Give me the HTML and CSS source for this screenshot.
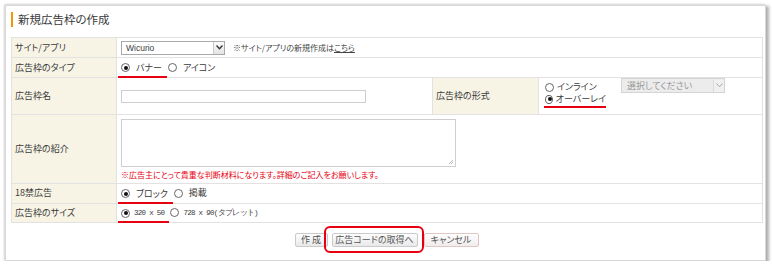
FILE: index.html
```html
<!DOCTYPE html>
<html lang="ja">
<head>
<meta charset="utf-8">
<link rel="stylesheet" href="styles.css">
</head>
<body>
<div class="card">
  <h1 class="title">新規広告枠の作成</h1>
  <table class="form">
    <colgroup>
      <col class="c1"><col class="c2"><col class="c3"><col class="c4">
    </colgroup>
    <tr class="r1">
      <th>サイト/アプリ</th>
      <td colspan="3">
        <span class="select"><span class="sel-text">Wicurio</span><span class="sel-arrow"><svg width="7" height="5" viewBox="0 0 7 5"><path d="M0.5 0.5 L3.5 3.8 L6.5 0.5" fill="none" stroke="#333" stroke-width="1.3"/></svg></span></span>
        <span class="note">※サイト/アプリの新規作成は<u>こちら</u></span>
      </td>
    </tr>
    <tr class="r2">
      <th>広告枠のタイプ</th>
      <td colspan="3">
        <span class="mark"><span class="radio on"></span><span class="rlabel">バナー</span></span><span class="radio"></span><span class="rlabel">アイコン</span>
      </td>
    </tr>
    <tr class="r3">
      <th>広告枠名</th>
      <td><span class="input"></span></td>
      <th>広告枠の形式</th>
      <td>
        <div class="fmt">
          <div class="fmt-radios">
            <div class="fline"><span class="radio"></span><span class="rl2">インライン</span></div>
            <div class="fline mark2"><span class="radio on"></span><span class="rl2">オーバーレイ</span></div>
          </div>
          <span class="select dis"><span class="sel-text">選択してください</span><span class="sel-arrow"><svg width="7" height="5" viewBox="0 0 7 5"><path d="M0.5 0.5 L3.5 3.8 L6.5 0.5" fill="none" stroke="#aaa" stroke-width="1"/></svg></span></span>
        </div>
      </td>
    </tr>
    <tr class="r4">
      <th>広告枠の紹介</th>
      <td colspan="3">
        <span class="textarea"><svg class="grip" width="6" height="6" viewBox="0 0 6 6"><path d="M5 1 L1 5 M5 3 L3 5" stroke="#bbb" stroke-width="1"/></svg></span>
        <div class="warn">※広告主にとって貴重な判断材料になります。詳細のご記入をお願いします。</div>
      </td>
    </tr>
    <tr class="r5">
      <th>18禁広告</th>
      <td colspan="3">
        <span class="mark"><span class="radio on"></span><span class="rlabel">ブロック</span></span><span class="radio"></span><span class="rlabel">掲載</span>
      </td>
    </tr>
    <tr class="r6">
      <th>広告枠のサイズ</th>
      <td colspan="3">
        <span class="mark"><span class="radio on"></span><span class="rlabel mono">320 x 50</span></span><span class="radio"></span><span class="rlabel mono">728 x 90(タブレット)</span>
      </td>
    </tr>
  </table>
  <div class="actions">
    <button class="btn b1">作 成</button>
    <span class="hl"><button class="btn b2">広告コードの取得へ</button></span>
    <button class="btn b3">キャンセル</button>
  </div>
</div>
</body>
</html>
```
FILE: styles.css
```css
html, body {
  margin: 0;
  padding: 0;
  background: #fff;
}
body {
  font-family: "Noto Sans CJK JP", "Liberation Sans", sans-serif;
  font-feature-settings: "palt";
  color: #3a3a3a;
  font-size: 9px;
}
.card {
  box-sizing: border-box;
  margin: 5px 0 0 5px;
  width: 761px;
  height: 256px;
  background: #fff;
  border: 1px solid #d8d8d8;
  box-shadow: 2px 2px 3px 1px #b0b0b0, -1px -1px 2px #ddd;
  padding: 6px 0 0 5px;
}
.title {
  margin: 0;
  height: 15px;
  border-left: 2px solid #f39800;
  padding-left: 5px;
  font-size: 11.5px;
  font-weight: normal;
  line-height: 15px;
  color: #3a3a3a;
}
.form {
  margin-top: 10px;
  width: 751px;
  border-collapse: collapse;
  table-layout: fixed;
  border: 1px solid #dedede;
}
.c1 { width: 105px; }
.c2 { width: 316px; }
.c3 { width: 106px; }
.c4 { width: 224px; }
.form th, .form td {
  border: 1px solid #e2e2e2;
  padding: 0 0 0 3px;
  vertical-align: middle;
  text-align: left;
  font-weight: normal;
  line-height: 12px;
  white-space: nowrap;
}
.form th {
  background: #f7f4e6;
}
.form td {
  padding-left: 4px;
}
.r1 { height: 20px; }
.r2 { height: 20px; }
.r3 { height: 37px; }
.r4 { height: 69px; }
.r5 { height: 19px; }
.r6 { height: 19px; }

.select {
  display: inline-flex;
  vertical-align: middle;
  box-sizing: border-box;
  width: 104px;
  height: 14px;
  border: 1px solid #a9a9a9;
  background: #fff;
  align-items: center;
  justify-content: space-between;
  font-size: 9px;
}
.sel-text {
  padding-left: 4px;
  font-family: "Liberation Sans", "Noto Sans CJK JP", sans-serif;
  font-size: 8.5px;
}
.sel-arrow {
  width: 11px;
  height: 12px;
  box-sizing: border-box;
  border-left: 1px solid #ccc;
  background: linear-gradient(#fafafa, #e4e4e4);
  display: flex;
  align-items: center;
  justify-content: center;
}
.note {
  margin-left: 6px;
  vertical-align: middle;
  color: #444;
  font-size: 8px;
}
.note u { color: #444; }

.radio {
  display: inline-block;
  box-sizing: border-box;
  width: 9px;
  height: 9px;
  border: 1px solid #666;
  border-radius: 50%;
  background: #fff;
  vertical-align: middle;
  position: relative;
}
.radio.on::after {
  content: "";
  position: absolute;
  left: 1.5px;
  top: 1.5px;
  width: 4px;
  height: 4px;
  border-radius: 50%;
  background: #111;
}
.rlabel {
  display: inline-block;
  margin-left: 6px;
  margin-right: 2px;
  vertical-align: middle;
}
.mono {
  font-family: "Liberation Mono", monospace;
  font-size: 7.5px;
  letter-spacing: -0.7px;
  margin-left: 4px;
}
.mark {
  display: inline-block;
  margin-left: -3px;
  padding: 2px 3px 2px 3px;
  border-bottom: 2px solid #e60012;
  vertical-align: middle;
  position: relative;
  top: 1px;
}
.form td > .radio { margin-left: 1px; }

.input {
  display: block;
  box-sizing: border-box;
  width: 245px;
  height: 13px;
  border: 1px solid #cfcfcf;
  background: #fff;
}
.fmt {
  display: flex;
  align-items: flex-start;
  gap: 15px;
  padding-left: 2px;
  margin-top: -3px;
}
.fmt-radios {
  display: flex;
  flex-direction: column;
  flex-shrink: 0;
}
.fline {
  display: flex;
  align-items: center;
  height: 12px;
}
.rl2 { margin-left: 3px; }
.mark2 {
  border-bottom: 2px solid #e60012;
  padding-bottom: 1px;
  margin-left: -1px;
  padding-left: 1px;
  width: 61px;
}
.select.dis {
  width: 104px;
  height: 15px;
  margin-top: -3px;
  border-color: #d4d4d4;
  background: #ececec;
  color: #999;
  flex-shrink: 0;
}
.select.dis .sel-arrow {
  background: #f0f0f0;
  border-left-color: #ddd;
}
.select.dis .sel-text {
  font-family: "Noto Sans CJK JP", sans-serif;
  font-size: 9px;
  padding-left: 5px;
}

.textarea {
  display: block;
  position: relative;
  box-sizing: border-box;
  width: 335px;
  height: 48px;
  border: 1px solid #cfcfcf;
  background: #fff;
  margin-top: 1px;
}
.grip {
  position: absolute;
  right: 1px;
  bottom: 1px;
}
.warn {
  color: #e60012;
  font-size: 8px;
  margin-top: 2px;
}

.actions {
  display: flex;
  justify-content: center;
  align-items: center;
  gap: 4px;
  margin-top: 3px;
  padding-right: 3px;
}
.btn {
  box-sizing: border-box;
  height: 14px;
  padding: 0;
  border: 1px solid #cacaca;
  border-radius: 2px;
  background: linear-gradient(#fdfdfd, #e9e9e9);
  color: #555;
  font-family: "Noto Sans CJK JP", sans-serif;
  font-feature-settings: "palt";
  font-size: 9px;
  line-height: 12px;
  white-space: nowrap;
}
.b1 { width: 33px; }
.b2 { width: 86px; }
.b3 { width: 55px; margin-left: 2px; border-color: #e2c6c6; background: linear-gradient(#fefefe, #f1ecec); }
.hl {
  display: inline-flex;
  box-sizing: border-box;
  height: 27px;
  padding: 0 4px 0 6px;
  margin: 0 -6px 0 -8px;
  align-items: center;
  border: 2px solid #e60012;
  border-radius: 6px;
}
```
